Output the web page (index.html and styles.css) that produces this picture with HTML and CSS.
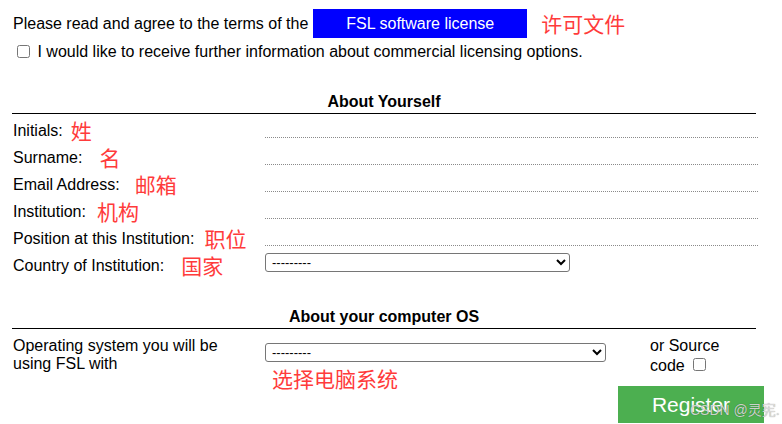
FILE: index.html
```html
<!DOCTYPE html>
<html>
<head>
<meta charset="utf-8">
<link rel="stylesheet" href="styles.css">
</head>
<body>
<div class="page">
  <div class="terms">
    <span>Please read and agree to the terms of the</span>
    <a class="license-btn" href="#">FSL software license</a>
    <span class="note note-terms">许可文件</span>
  </div>
  <label class="optin"><input type="checkbox" class="check optin-check"> I would like to receive further information about commercial licensing options.</label>

  <h2 class="section-title section-about">About Yourself</h2>
  <div class="fields">
    <div class="label">Initials:<span class="note g8">姓</span></div>
    <div class="field"><input type="text" class="line-input"></div>
    <div class="label">Surname:<span class="note g17">名</span></div>
    <div class="field"><input type="text" class="line-input"></div>
    <div class="label">Email Address:<span class="note g15">邮箱</span></div>
    <div class="field"><input type="text" class="line-input"></div>
    <div class="label">Institution:<span class="note g11">机构</span></div>
    <div class="field"><input type="text" class="line-input"></div>
    <div class="label">Position at this Institution:<span class="note g10">职位</span></div>
    <div class="field"><input type="text" class="line-input"></div>
    <div class="label">Country of Institution:<span class="note g17">国家</span></div>
    <div class="field"><select class="select country-select"><option>---------</option></select></div>
  </div>

  <h2 class="section-title section-os">About your computer OS</h2>
  <div class="os-row">
    <div class="os-label">Operating system you will be using FSL with</div>
    <div class="os-mid">
      <select class="select os-select"><option>---------</option></select>
      <div class="note note-os">选择电脑系统</div>
    </div>
    <div class="os-right">
      <div class="source">or Source code <input type="checkbox" class="check source-check"></div>
      <button class="register" type="button">Register</button>
    </div>
  </div>
</div>
<div class="watermark">CSDN @灵宪.</div>
</body>
</html>
```

FILE: styles.css
```css
html, body {
  margin: 0;
  padding: 0;
  background: #fff;
}
body {
  font-family: "Liberation Sans", Arial, "Noto Sans CJK SC", sans-serif;
  font-size: 16px;
  color: #000;
  position: relative;
  height: 424px;
  overflow: hidden;
}
.page {
  padding: 9px 0 0 13px;
}
.terms {
  display: flex;
  align-items: center;
  height: 29px;
}
.license-btn {
  display: inline-flex;
  align-items: center;
  justify-content: center;
  width: 214px;
  height: 29px;
  margin-left: 5px;
  background: #0000ff;
  color: #fff;
  text-decoration: none;
  font-size: 16px;
}
.note {
  color: #ff3b3b;
  font-family: "Noto Sans CJK SC", "Liberation Sans", sans-serif;
  font-size: 21px;
  line-height: 1;
}
.note-terms {
  margin-left: 14px;
}
.optin {
  display: block;
  margin-top: 4px;
}
.check {
  width: 13px;
  height: 13px;
  margin: 3px 3px 3px 4px;
}
.optin-check {
  vertical-align: -1px;
}
.section-title {
  margin: 0 0 0 -1px;
  width: 744px;
  font-size: 16px;
  font-weight: bold;
  line-height: 18px;
  text-align: center;
  padding-bottom: 2px;
  border-bottom: 1px solid #000;
}
.section-about {
  margin-top: 32px;
}
.fields {
  display: grid;
  grid-template-columns: 252px 493px;
  grid-auto-rows: 27px;
  margin-top: 3px;
}
.label {
  display: flex;
  align-items: center;
}
.g8 { margin-left: 8px; }
.g10 { margin-left: 10px; }
.g11 { margin-left: 11px; }
.g15 { margin-left: 15px; }
.g17 { margin-left: 17px; }
.line-input {
  display: block;
  box-sizing: border-box;
  width: 493px;
  height: 21px;
  padding: 0 2px;
  border: none;
  border-bottom: 1px dotted #8a8a8a;
  background: transparent;
  font: inherit;
}
.select {
  display: block;
  box-sizing: border-box;
  height: 19px;
  padding: 0 2px;
  border: 1px solid #767676;
  border-radius: 3px;
  background: #fff;
  color: #000;
  font-family: "Liberation Sans", Arial, sans-serif;
  font-size: 13px;
}
.country-select {
  width: 305px;
  margin-top: 1px;
}
.section-os {
  margin-top: 29px;
}
.os-row {
  display: flex;
  align-items: flex-start;
  margin-top: 8px;
}
.os-label {
  box-sizing: border-box;
  width: 252px;
  padding-right: 30px;
}
.os-mid {
  width: 341px;
}
.os-select {
  width: 341px;
  margin-top: 6px;
}
.note-os {
  margin-top: 6px;
  margin-left: 7px;
}
.os-right {
  margin-left: 12px;
  width: 146px;
}
.source {
  width: 90px;
  padding-left: 32px;
}
.source-check {
  vertical-align: 0;
}
.register {
  display: block;
  width: 146px;
  height: 37px;
  margin-top: 11px;
  border: none;
  background: #4caf50;
  color: #fff;
  font-family: "Liberation Sans", Arial, sans-serif;
  font-size: 21px;
  padding: 0;
}
.watermark {
  position: absolute;
  left: 690px;
  top: 399px;
  font-family: "Liberation Sans", "Noto Sans CJK SC", sans-serif;
  font-size: 14px;
  color: rgba(225, 225, 225, 0.9);
  text-shadow: 0 0 1px rgba(0, 0, 0, 0.45);
}
```
